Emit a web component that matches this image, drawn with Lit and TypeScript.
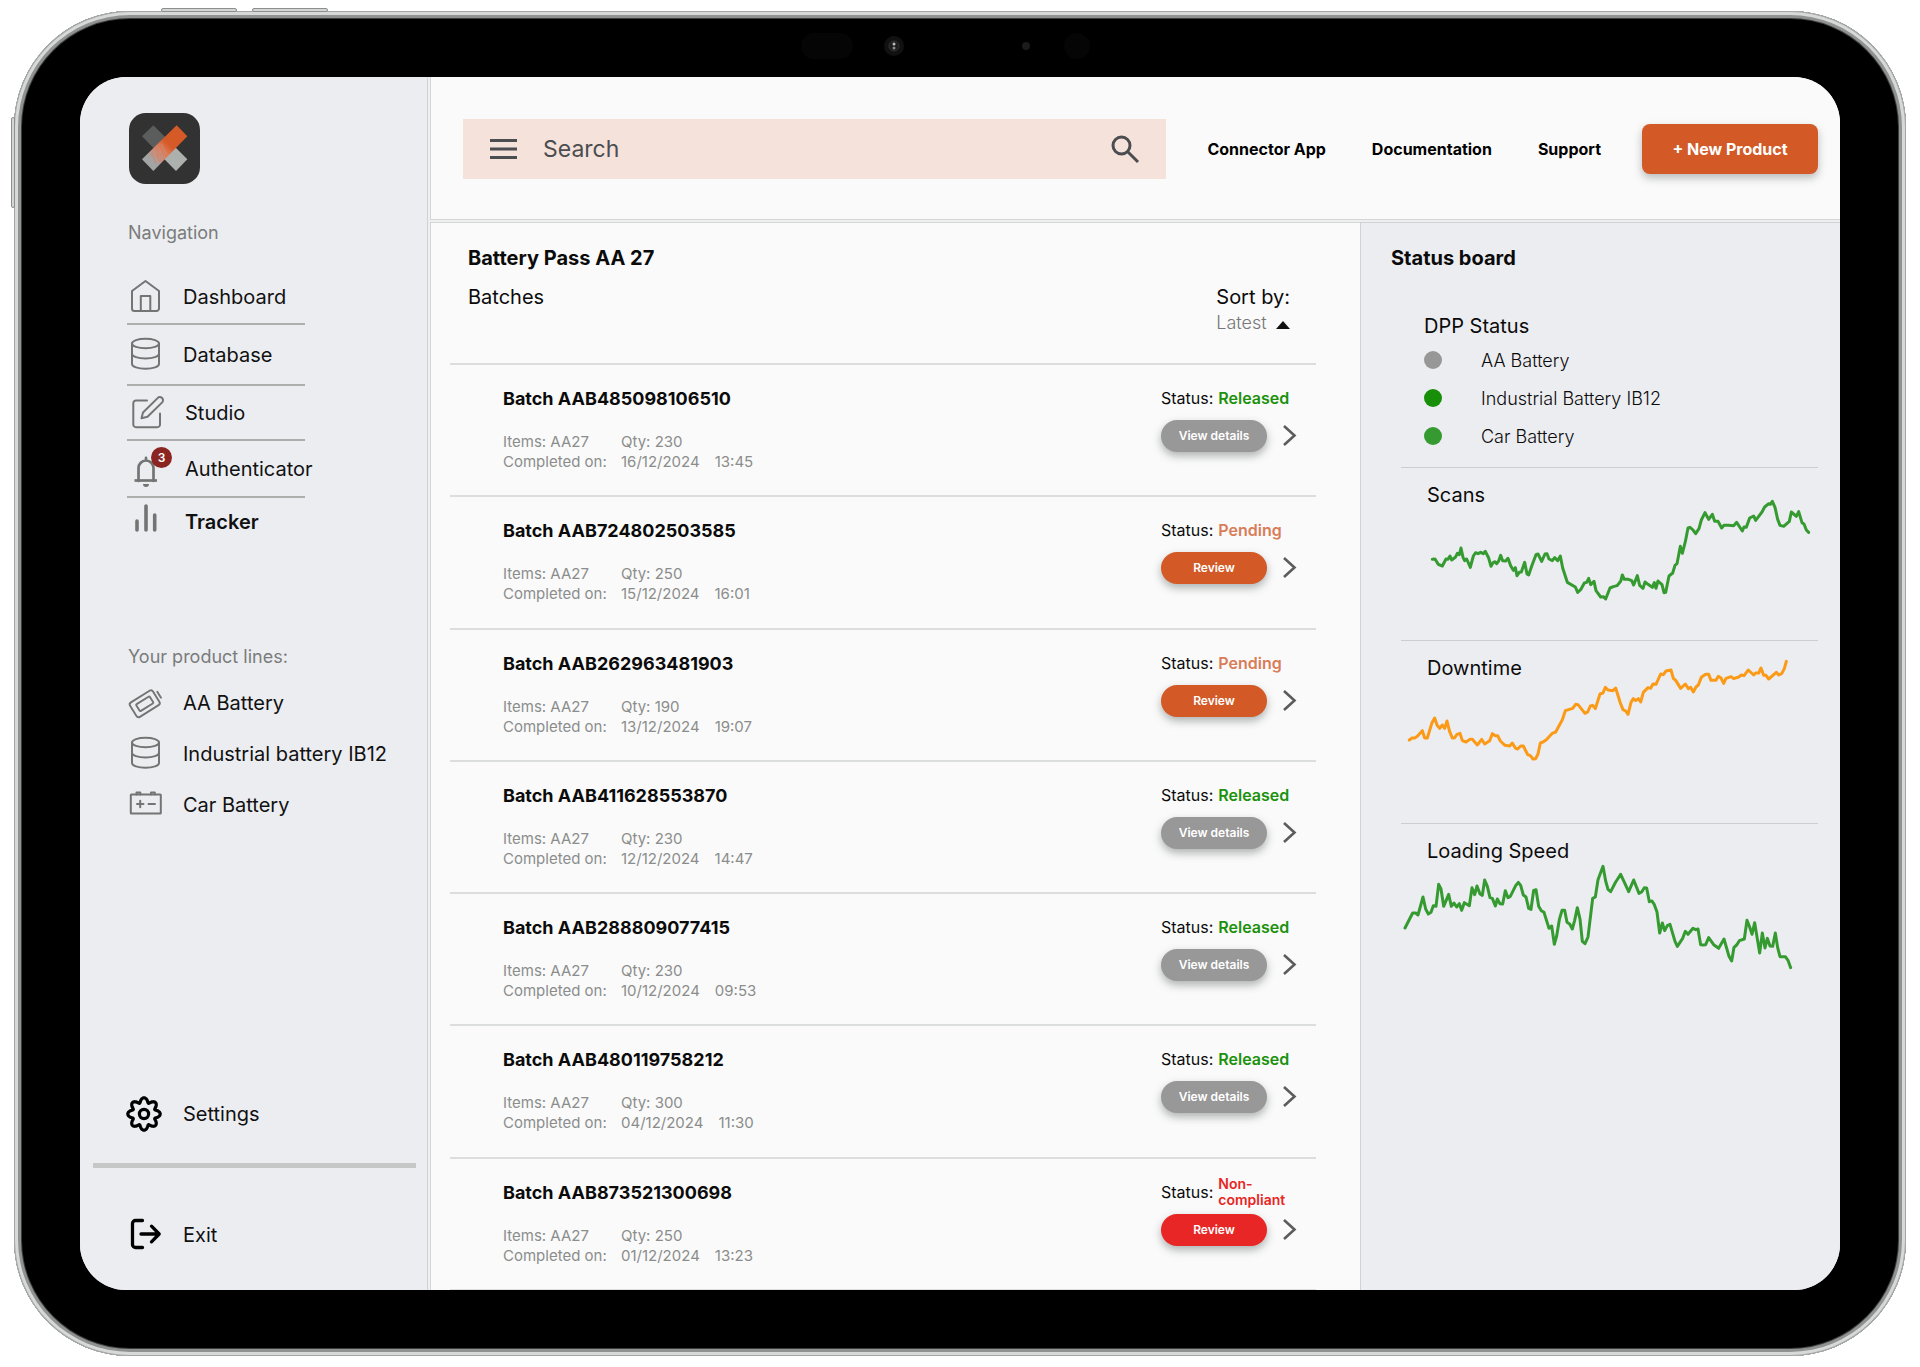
import { LitElement, html, svg, css } from "lit";
import { customElement, property } from "lit/decorators.js";
import { classMap } from "lit/directives/class-map.js";

type Status = "Released" | "Pending" | "Non-compliant";

interface Batch {
  id: string;
  qty: number;
  date: string;
  time: string;
  status: Status;
}

const BATCHES: Batch[] = [
  { id: "AAB485098106510", qty: 230, date: "16/12/2024", time: "13:45", status: "Released" },
  { id: "AAB724802503585", qty: 250, date: "15/12/2024", time: "16:01", status: "Pending" },
  { id: "AAB262963481903", qty: 190, date: "13/12/2024", time: "19:07", status: "Pending" },
  { id: "AAB411628553870", qty: 230, date: "12/12/2024", time: "14:47", status: "Released" },
  { id: "AAB288809077415", qty: 230, date: "10/12/2024", time: "09:53", status: "Released" },
  { id: "AAB480119758212", qty: 300, date: "04/12/2024", time: "11:30", status: "Released" },
  { id: "AAB873521300698", qty: 250, date: "01/12/2024", time: "13:23", status: "Non-compliant" },
];

const PRODUCTS = [
  { name: "AA Battery", tone: "idle" },
  { name: "Industrial Battery IB12", tone: "good" },
  { name: "Car Battery", tone: "fine" },
];

const CHARTS = [
  {
    title: "Scans",
    color: "#359b31",
    box: "63 24 1251 516",
    points:
      "157,298 165,297 175,313 187,318 198,297 204,298 210,288 215,300 226,292 232,280 238,284 243,264 249,292 254,302 260,297 271,322 280,288 287,278 294,281 302,277 310,281 316,274 326,294 333,319 339,308 344,305 350,311 356,303 362,286 368,302 377,303 384,295 392,317 400,331 406,323 411,347 418,337 424,336 434,307 441,342 446,345 456,316 468,284 474,282 485,304 495,282 501,281 507,297 517,302 524,293 533,302 541,288 548,324 562,367 586,381 593,397 602,389 613,369 620,367 626,355 632,374 642,364 648,392 662,411 670,410 677,417 690,384 700,380 711,377 722,364 727,345 733,358 745,358 755,362 761,375 772,347 779,376 789,385 795,366 804,373 817,382 823,368 828,385 834,363 846,374 852,398 857,397 867,348 878,339 885,316 891,311 901,259 907,280 916,245 924,204 930,202 939,210 947,221 957,206 964,180 975,158 986,178 997,163 1004,184 1014,184 1025,204 1032,196 1045,196 1061,197 1070,187 1087,213 1092,201 1099,202 1109,174 1121,168 1127,181 1146,156 1154,141 1166,131 1171,133 1177,124 1185,142 1193,178 1200,196 1211,199 1228,184 1234,156 1249,169 1256,155 1266,188 1272,192 1279,210 1286,217",
  },
  {
    title: "Downtime",
    color: "#fb9a17",
    box: "63 4 1251 546",
    points:
      "88,301 96,295 104,295 112,290 127,273 134,295 142,295 156,249 164,235 171,256 179,266 187,256 194,266 201,244 209,276 217,295 224,294 231,284 240,281 247,303 258,307 270,299 277,299 292,316 305,299 314,313 329,303 337,282 346,288 353,288 361,304 375,317 389,319 397,310 406,325 413,328 422,319 430,319 443,345 451,348 459,358 467,357 474,343 481,310 489,307 499,300 517,281 527,277 547,240 556,213 578,206 587,194 594,195 615,221 623,217 631,199 638,197 646,207 660,163 669,160 676,143 684,151 699,153 707,145 721,190 729,210 737,214 744,224 753,188 760,177 767,183 775,177 782,187 790,158 804,144 812,146 819,133 828,134 842,103 850,105 858,94 873,91 880,116 887,122 902,146 916,133 925,147 932,143 940,157 948,142 955,136 964,113 977,104 986,104 993,122 1008,122 1015,110 1023,115 1031,131 1038,116 1053,111 1061,117 1076,112 1084,106 1092,108 1105,91 1121,106 1127,100 1136,100 1143,85 1151,107 1158,107 1166,118 1189,98 1196,106 1205,102 1213,87 1219,65",
  },
  {
    title: "Loading Speed",
    color: "#359b31",
    box: "63 553 1251 450",
    points:
      "75,865 98,820 107,820 114,826 129,772 137,808 145,823 153,818 160,798 168,800 176,734 183,748 191,800 206,764 214,800 222,790 230,802 238,792 245,812 253,789 268,798 276,744 284,765 291,739 300,763 307,767 314,721 322,740 330,774 337,776 346,799 352,778 360,792 368,793 376,753 384,774 391,770 407,738 415,728 422,737 430,766 438,772 446,806 453,809 461,752 468,750 476,800 484,813 492,818 507,866 515,859 523,914 530,889 538,840 546,812 554,812 561,848 569,853 577,868 584,842 592,804 600,838 607,905 615,912 624,892 638,776 646,772 654,720 669,680 677,724 684,749 692,756 707,727 722,704 746,756 761,721 777,761 785,757 793,744 800,745 808,786 816,784 823,795 831,817 839,880 847,850 854,873 862,858 870,854 885,905 892,920 908,896 916,875 924,884 939,866 947,870 954,868 962,915 970,916 977,915 986,894 1001,915 1016,926 1032,898 1047,950 1055,964 1062,923 1070,916 1078,903 1093,898 1101,842 1109,862 1116,884 1124,849 1139,940 1147,880 1155,925 1162,896 1170,919 1178,920 1186,880 1193,924 1200,951 1216,951 1224,962 1232,984",
  },
];

/** Outline of a cog with eight rounded lobes. */
const cogPath = (): string => {
  const pts: string[] = [];
  for (let i = 0; i < 160; i++) {
    const t = (i / 160) * Math.PI * 2;
    const r = 13.9 + 2.3 * Math.cos(8 * t);
    const a = t + 0.04 * Math.sin(8 * t);
    pts.push(`${(16 + r * Math.cos(a)).toFixed(2)} ${(18 + r * Math.sin(a)).toFixed(2)}`);
  }
  return `M${pts.join("L")}Z`;
};

const ICONS: Record<string, unknown> = {
  home: svg`<g stroke-width="2"><path d="M4 12 17.500 2 31 12V29.500a2.500 2.500 0 0 1-2.500 2.500H6.500A2.500 2.500 0 0 1 4 29.500Z"/><path d="M12.800 32V17h9.500V32"/></g>`,
  database: svg`<g stroke-width="2"><ellipse cx="17.500" cy="6.500" rx="13.500" ry="4.800"/><path d="M4 6.500V27c0 2.700 6 4.800 13.500 4.800S31 29.700 31 27V6.500M4 16.800c0 2.600 6 4.700 13.500 4.700s13.500-2.100 13.500-4.700"/></g>`,
  studio: svg`<g stroke-width="2"><path d="M19 5.500H8A2.700 2.700 0 0 0 5.300 8.200V29.500A2.700 2.700 0 0 0 8 32.200H29.300a2.700 2.700 0 0 0 2.700-2.700V18.500"/><path d="M15 17.500 29.600 3.100a3.100 3.100 0 0 1 4.600 4.300L19.500 21.800 13.500 23.300Z"/></g>`,
  bell: svg`<g stroke-width="2.700"><path d="M10.500 30V17a7.500 7.500 0 0 1 15 0V30M18 6.800V9"/><path d="M6.500 29.500H29" stroke-linecap="butt"/></g><path d="M15 33h6a3 3 0 0 1-6 0Z" fill="currentColor" stroke="none"/>`,
  tracker: svg`<g stroke-width="3.600"><path d="M9 17V26M18 2V26M26.700 11V26"/></g>`,
  cell: svg`<g stroke-width="1.900" transform="rotate(-32 18 18)"><rect x="3" y="9.500" width="27" height="17" rx="2.500"/><rect x="8.500" y="14" width="16" height="8" rx="1"/><path d="M33.500 14.500V21.500"/></g>`,
  car: svg`<g stroke-width="2"><rect x="2.800" y="7.500" width="30" height="19" rx=".5"/><path d="M8.500 7.500V5.500h3.800v2M23 7.500V5.500h3.800v2M9 17h6.500M12.200 13.700v6.600M20.500 17h6.500"/></g>`,
  cog: svg`<g stroke-width="3.200"><path d="${cogPath()}"/><circle cx="16" cy="18" r="4.600"/></g>`,
  exit: svg`<g stroke-width="3.300"><path d="M14.500 3.500H7.500A3 3 0 0 0 4.500 6.500V27.500a3 3 0 0 0 3 3h7M13 17H31M23.500 9.200 31.200 17 23.500 24.800"/></g>`,
};

@customElement("nav-item")
class NavItem extends LitElement {
  @property() icon = "";
  @property() label = "";
  @property({ type: Number }) count = 0;
  @property({ type: Boolean }) current = false;
  @property({ type: Boolean }) strong = false;
  @property({ type: Boolean }) wide = false;

  static styles = css`
    :host {
      display: block;
    }
    .link {
      display: flex;
      align-items: center;
      gap: 11px;
      height: 100%;
      color: #111;
      font-size: 20px;
      line-height: 24px;
      text-decoration: none;
      white-space: nowrap;
    }
    .current {
      font-weight: 600;
    }
    .pic {
      position: relative;
      display: flex;
      flex: none;
      width: 44px;
      color: #737574;
    }
    .wide {
      width: 46px;
    }
    .dark {
      color: #000;
    }
    .icon {
      width: 36px;
      height: 36px;
      overflow: visible;
      fill: none;
      stroke: currentColor;
      stroke-linecap: round;
      stroke-linejoin: round;
    }
    .badge {
      position: absolute;
      top: -4px;
      left: 23px;
      width: 21px;
      border-radius: 50%;
      background: #8b2522;
      color: #fff;
      font-size: 12px;
      font-weight: 600;
      line-height: 21px;
      text-align: center;
    }
  `;

  render() {
    return html`<a class=${classMap({ link: true, current: this.current })} href="#">
      <span class=${classMap({ pic: true, dark: this.strong, wide: this.wide })}>
        <svg class="icon" viewBox="0 0 36 36" aria-hidden="true">${ICONS[this.icon]}</svg>
        ${this.count ? html`<span class="badge">${this.count}</span>` : ""}
      </span>
      ${this.label}
    </a>`;
  }
}

@customElement("batch-row")
class BatchRow extends LitElement {
  @property({ attribute: false }) batch!: Batch;

  static styles = css`
    :host {
      display: flex;
      justify-content: space-between;
      box-sizing: border-box;
      padding: 22px 16px 0 53px;
      border-top: 2px solid #dcdede;
    }
    .name {
      margin: 0 0 21px;
      font-size: 18px;
      font-weight: 700;
      line-height: 24px;
    }
    .facts {
      display: grid;
      grid-template-columns: 118px auto auto;
      color: #8b8d8c;
      font-size: 15px;
      line-height: 20px;
    }
    .time {
      padding-left: 15px;
    }
    .side {
      width: 139px;
    }
    .state {
      display: flex;
      align-items: center;
      gap: 5px;
      height: 22px;
      margin-bottom: 11px;
      font-size: 16px;
      line-height: 22px;
      white-space: nowrap;
    }
    .value {
      font-weight: 600;
    }
    .released {
      color: #1b910c;
    }
    .pending {
      color: #d97c58;
    }
    .bad {
      color: #e8261f;
      font-size: 14px;
      line-height: 16px;
      white-space: normal;
    }
    .actions {
      display: flex;
      align-items: center;
      justify-content: space-between;
    }
    .action {
      width: 106px;
      height: 32px;
      padding: 0;
      border: 0;
      border-radius: 16px;
      background: #989898;
      box-shadow: 0 4px 8px rgba(60, 70, 70, 0.4);
      color: #fff;
      font: 600 12px/16px Inter, sans-serif;
    }
    .warn {
      background: #d35926;
    }
    .alert {
      background: #e92626;
    }
    .open {
      display: flex;
      padding: 0;
      border: 0;
      background: none;
    }
    .chevron {
      width: 20px;
      height: 24px;
      fill: none;
      stroke: #5b5c5e;
      stroke-width: 2.6;
    }
  `;

  render() {
    const b = this.batch;
    const pending = b.status === "Pending";
    const bad = b.status === "Non-compliant";
    const released = b.status === "Released";
    return html`
      <div>
        <h3 class="name">Batch ${b.id}</h3>
        <div class="facts">
          <span>Items: AA27</span><span>Qty: ${b.qty}</span><span></span>
          <span>Completed on:</span><span>${b.date}</span><span class="time">${b.time}</span>
        </div>
      </div>
      <div class="side">
        <div class="state">
          <span>Status:</span>
          <span class=${classMap({ value: true, released, pending, bad })}>${b.status}</span>
        </div>
        <div class="actions">
          <button class=${classMap({ action: true, warn: pending, alert: bad })}>
            ${released ? "View details" : "Review"}
          </button>
          <button class="open" aria-label="Open batch ${b.id}">
            <svg class="chevron" viewBox="0 0 20 24" aria-hidden="true"><path d="M4 2 14.500 11.500 4 21" /></svg>
          </button>
        </div>
      </div>
    `;
  }
}

@customElement("trend-chart")
class TrendChart extends LitElement {
  @property({ attribute: false }) chart!: (typeof CHARTS)[number];

  static styles = css`
    :host {
      display: grid;
      border-top: 1px solid #cbcdcf;
    }
    .title {
      grid-area: 1 / 1;
      margin: 0;
      padding: 15px 26px;
      font-size: 20px;
      font-weight: 400;
      line-height: 24px;
    }
    .plot {
      grid-area: 1 / 1;
      display: block;
      width: 100%;
      fill: none;
      stroke-width: 9;
      stroke-linejoin: round;
      stroke-linecap: round;
    }
  `;

  render() {
    const c = this.chart;
    return html`<h3 class="title">${c.title}</h3>
      <svg class="plot" viewBox=${c.box} stroke=${c.color} aria-hidden="true">
        <polyline points=${c.points} />
      </svg>`;
  }
}

@customElement("app-root")
class AppRoot extends LitElement {
  static styles = css`
    :host {
      display: block;
      box-sizing: border-box;
      min-height: 100vh;
      padding: 11px 14px;
      background: #fff;
      color: #0b0b0b;
      font-family: Inter, sans-serif;
    }
    .device {
      position: relative;
      display: flex;
      box-sizing: border-box;
      min-height: calc(100vh - 22px);
      padding: 66px;
      border-radius: 116px;
      background: #000;
      box-shadow: inset 0 0 0 1px #a2a5a3, inset 0 0 0 4px #d6d9d7, inset 0 0 0 7px #8f9290,
        inset 0 0 0 8px #3c3d3d;
    }
    .key {
      position: absolute;
      box-sizing: border-box;
      border: 1px solid #8c8f8d;
      border-radius: 2px;
      background: #d3d6d4;
    }
    .key-a,
    .key-b {
      top: -3px;
      width: 76px;
      height: 4px;
    }
    .key-a {
      left: 147px;
    }
    .key-b {
      left: 238px;
    }
    .key-c {
      top: 106px;
      left: -3px;
      width: 4px;
      height: 91px;
    }
    .camera {
      position: absolute;
      top: 20px;
      left: calc(50% - 160px);
      width: 292px;
      height: 30px;
    }
    .screen {
      display: grid;
      flex: 1;
      grid-template-columns: 348px 1fr;
      gap: 2px;
      overflow: hidden;
      border-radius: 46px;
      background: #eef0f0;
    }
    .sidebar {
      display: flex;
      flex-direction: column;
      box-sizing: border-box;
      padding: 36px 11px 30px 13px;
      border-right: 1px solid #cfd3d3;
      background: #ecedf1;
    }
    .logo {
      width: 71px;
      height: 71px;
      margin-left: 36px;
    }
    .caption {
      margin: 0 0 0 35px;
      color: #7a7c7b;
      font-size: 18px;
      font-weight: 400;
      line-height: 22px;
    }
    .nav-title {
      margin-top: 38px;
    }
    .menu {
      display: grid;
      grid-template-rows: 54px 61px 55px 57px 48px;
      grid-template-columns: 100%;
      width: 178px;
      margin: 27px 0 0 34px;
    }
    .menu-item {
      box-sizing: border-box;
      padding-left: 1px;
      border-bottom: 2px solid #acafad;
    }
    .menu-item:last-child {
      border: 0;
    }
    .lines-title {
      margin-top: 100px;
    }
    .lines {
      display: grid;
      grid-auto-rows: 51px;
      margin: 9px 0 0 35px;
    }
    .foot {
      display: grid;
      grid-template-rows: 50px;
      grid-auto-rows: auto;
      gap: 24px;
      margin-top: auto;
    }
    .foot-item {
      height: 50px;
      margin-left: 35px;
    }
    .bar {
      height: 5px;
      margin-bottom: 18px;
      background: #c5c8c7;
    }
    .main {
      display: grid;
      grid-template-rows: 143px 1fr;
      grid-template-columns: 1fr 480px;
      row-gap: 2px;
      min-width: 0;
    }
    .header {
      display: flex;
      grid-column: 1 / 3;
      align-items: center;
      gap: 41px;
      box-sizing: border-box;
      padding: 1px 22px 0 32px;
      border: 1px solid #d3d6d6;
      border-width: 0 0 1px 1px;
      background: #fafafa;
    }
    .search {
      display: flex;
      flex: 1;
      align-items: center;
      box-sizing: border-box;
      height: 60px;
      min-width: 0;
      padding: 0 22px;
      background: #f5e2da;
    }
    .tool {
      display: flex;
      padding: 0;
      border: 0;
      background: none;
    }
    .glyph {
      width: 36px;
      height: 36px;
      fill: none;
      stroke: #4b4d50;
      stroke-width: 3;
    }
    .field {
      flex: 1;
      min-width: 0;
      margin: 0 22px;
      padding: 0;
      border: 0;
      outline: 0;
      background: none;
      color: #4b4d50;
      font: 400 23px/30px Inter, sans-serif;
    }
    .field::placeholder {
      color: #4b4d50;
      opacity: 1;
    }
    .links {
      display: flex;
      gap: 46px;
    }
    .link {
      color: #000;
      font-size: 16px;
      font-weight: 700;
      line-height: 20px;
      text-decoration: none;
      white-space: nowrap;
    }
    .create {
      width: 176px;
      height: 50px;
      padding: 0;
      border: 0;
      border-radius: 8px;
      background: #d35926;
      box-shadow: 0 4px 8px rgba(60, 70, 70, 0.35);
      color: #fff;
      font: 700 16px/20px Inter, sans-serif;
    }
    .batches {
      display: flex;
      flex-direction: column;
      box-sizing: border-box;
      padding: 23px 44px 0 19px;
      border: 1px solid #d3d6d6;
      border-width: 1px 0 0 1px;
      background: #fafafa;
    }
    .heading {
      margin: 0;
      font-size: 20px;
      font-weight: 700;
      line-height: 24px;
    }
    .top {
      padding-left: 18px;
    }
    .sub {
      display: flex;
      justify-content: space-between;
      height: 78px;
      margin-top: 15px;
      padding-right: 26px;
      font-size: 20px;
      line-height: 24px;
    }
    .sort {
      display: grid;
      align-content: start;
      gap: 2px;
    }
    .picker {
      display: flex;
      align-items: center;
      justify-content: space-between;
    }
    .select {
      padding: 0;
      border: 0;
      appearance: none;
      background: none;
      color: #777;
      font: 300 18px/24px Inter, sans-serif;
    }
    .arrow {
      width: 14px;
      height: 8px;
      margin-top: 4px;
      fill: #111;
    }
    .rows {
      display: grid;
      flex: 1;
      grid-auto-rows: 1fr;
      border-bottom: 1px solid #dcdede;
    }
    .board {
      box-sizing: border-box;
      padding: 23px 22px 0 30px;
      border: 1px solid #cfd3d3;
      border-width: 1px 0 0 1px;
      background: #ecedf1;
    }
    .dpp {
      padding: 44px 0 12px 33px;
    }
    .dpp-title {
      margin: 0 0 3px;
      font-size: 20px;
      font-weight: 400;
      line-height: 24px;
    }
    .states {
      margin: 0;
      padding: 0;
      list-style: none;
    }
    .state {
      display: flex;
      align-items: center;
      gap: 39px;
      height: 38px;
      font-size: 18px;
      font-weight: 300;
    }
    .dot {
      width: 18px;
      height: 18px;
      border-radius: 50%;
      background: #979797;
    }
    .good {
      background: #188f08;
    }
    .fine {
      background: #359b31;
    }
    .charts {
      margin-left: 10px;
    }
  `;

  private logo() {
    const specks = [];
    for (let i = 0; i < 80; i++) {
      const along = 14 + ((i * 17) % 40);
      const across = ((i * 11) % 37) - 18;
      const x = 56 + along + across * 0.7;
      const y = 156 - along + across * 0.7;
      specks.push(svg`<rect x=${x} y=${y} width="2" height="2" fill=${along < 30 ? "#e07a52" : "#b59a92"} />`);
    }
    return html`<svg class="logo" viewBox="0 0 213 213" role="img" aria-label="Home">
      <defs>
        <linearGradient id="blend" gradientUnits="userSpaceOnUse" x1="160" y1="52" x2="56" y2="156">
          <stop offset="0.400" stop-color="#d55a27" />
          <stop offset="0.550" stop-color="#df7852" />
          <stop offset="0.700" stop-color="#cf8a74" />
          <stop offset="0.850" stop-color="#a3a4a4" />
        </linearGradient>
      </defs>
      <rect width="213" height="213" rx="50" fill="#323232" />
      <path d="M73 37 39 70 90 122 124 88Z" fill="#5b5d5c" />
      <path d="M124 88 90 122 141 174 175 139Z" fill="#adb1ae" />
      <path d="M143 37 175 70 73 174 39 139Z" fill="url(#blend)" />
      ${specks}
    </svg>`;
  }

  render() {
    return html`
      <div class="device">
        <span class="key key-a"></span><span class="key key-b"></span><span class="key key-c"></span>
        <svg class="camera" viewBox="0 0 292 30" aria-hidden="true">
          <rect x="1" y="2" width="52" height="26" rx="13" fill="#050505" />
          <circle cx="94" cy="15" r="10" fill="#111" />
          <circle cx="94" cy="15" r="5" fill="#1c1c1e" stroke="#333" />
          <circle cx="94" cy="13" r="1.500" fill="#bbb" />
          <circle cx="94" cy="17" r="1.500" fill="#888" />
          <circle cx="226" cy="15" r="4" fill="#1b1b1b" />
          <circle cx="277" cy="15" r="13" fill="#050505" />
        </svg>
        <div class="screen">
          <aside class="sidebar">
            ${this.logo()}
            <h2 class="caption nav-title">Navigation</h2>
            <nav class="menu">
              <nav-item class="menu-item" icon="home" label="Dashboard"></nav-item>
              <nav-item class="menu-item" icon="database" label="Database"></nav-item>
              <nav-item class="menu-item" icon="studio" label="Studio" wide></nav-item>
              <nav-item class="menu-item" icon="bell" label="Authenticator" count="3" wide></nav-item>
              <nav-item class="menu-item" icon="tracker" label="Tracker" current wide></nav-item>
            </nav>
            <h2 class="caption lines-title">Your product lines:</h2>
            <nav class="lines">
              <nav-item icon="cell" label="AA Battery"></nav-item>
              <nav-item icon="database" label="Industrial battery IB12"></nav-item>
              <nav-item icon="car" label="Car Battery"></nav-item>
            </nav>
            <div class="foot">
              <nav-item class="foot-item" icon="cog" label="Settings" strong></nav-item>
              <div class="bar"></div>
              <nav-item class="foot-item" icon="exit" label="Exit" strong></nav-item>
            </div>
          </aside>
          <div class="main">
            <header class="header">
              <form class="search" role="search">
                <button class="tool" type="button" aria-label="Menu">
                  <svg class="glyph" viewBox="0 0 36 36"><path d="M5 9.500H32M5 18H32M5 26.500H32" /></svg>
                </button>
                <input class="field" type="text" placeholder="Search" aria-label="Search" />
                <button class="tool" type="button" aria-label="Search">
                  <svg class="glyph" viewBox="0 0 36 36">
                    <circle cx="13.500" cy="14.500" r="8.500" />
                    <path d="M19.500 20.500 30 31" />
                  </svg>
                </button>
              </form>
              <nav class="links">
                <a class="link" href="#">Connector App</a>
                <a class="link" href="#">Documentation</a>
                <a class="link" href="#">Support</a>
              </nav>
              <button class="create">+ New Product</button>
            </header>
            <main class="batches">
              <div class="top">
                <h1 class="heading">Battery Pass AA 27</h1>
                <div class="sub">
                  <span>Batches</span>
                  <div class="sort">
                    <label for="sort">Sort by:</label>
                    <div class="picker">
                      <select class="select" id="sort">
                        <option>Latest</option>
                      </select>
                      <svg class="arrow" viewBox="0 0 14 8" aria-hidden="true"><path d="M7 0 14 8H0Z" /></svg>
                    </div>
                  </div>
                </div>
              </div>
              <div class="rows">${BATCHES.map((b) => html`<batch-row .batch=${b}></batch-row>`)}</div>
            </main>
            <aside class="board">
              <h2 class="heading">Status board</h2>
              <section class="dpp">
                <h3 class="dpp-title">DPP Status</h3>
                <ul class="states">
                  ${PRODUCTS.map(
                    (p) => html`<li class="state">
                      <span class=${classMap({ dot: true, [p.tone]: true })}></span>${p.name}
                    </li>`,
                  )}
                </ul>
              </section>
              <div class="charts">
                ${CHARTS.map((c) => html`<trend-chart .chart=${c}></trend-chart>`)}
              </div>
            </aside>
          </div>
        </div>
      </div>
    `;
  }
}
